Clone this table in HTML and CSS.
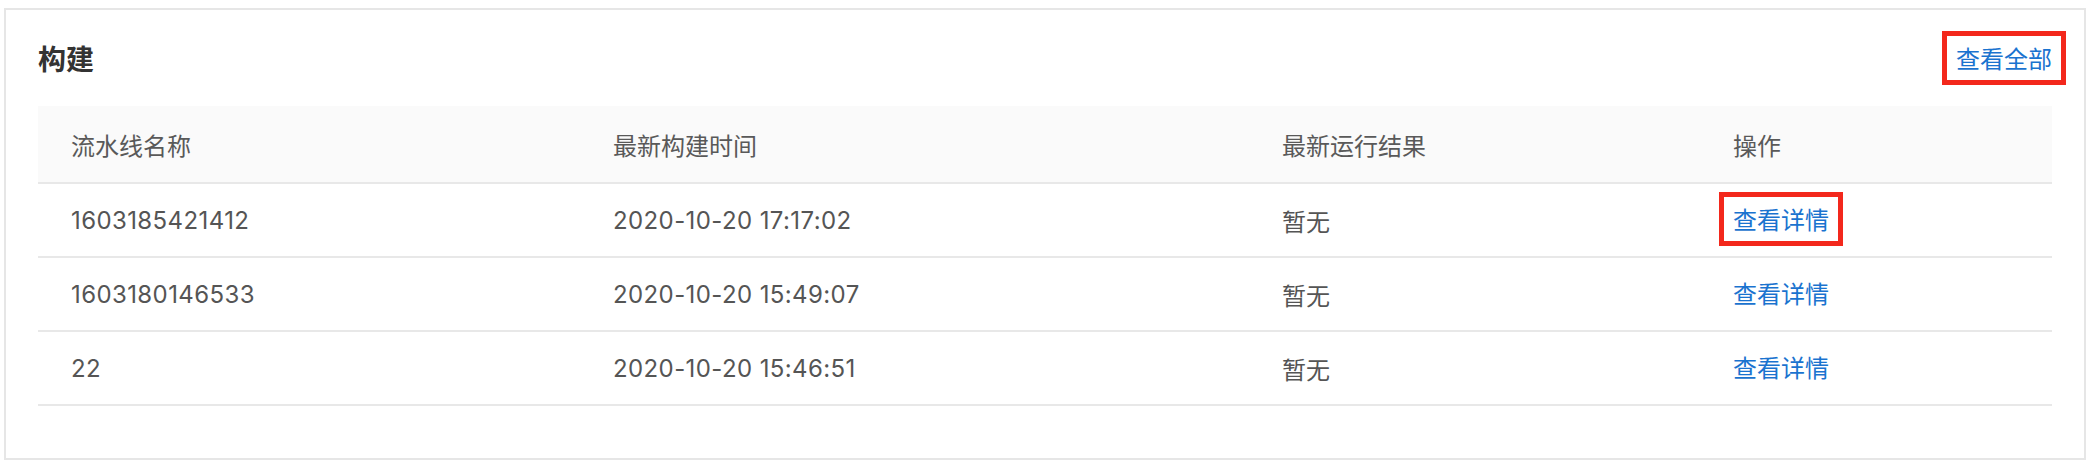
FILE: index.html
```html
<!DOCTYPE html>
<html lang="zh-CN">
<head>
<meta charset="utf-8">
<title>构建</title>
<link rel="stylesheet" href="styles.css">
</head>
<body>
<section class="card">
  <header class="card-head">
    <h2 class="card-title">构建</h2>
    <a class="link mark" href="#">查看全部</a>
  </header>
  <table class="table">
    <colgroup>
      <col class="c1"><col class="c2"><col class="c3"><col class="c4">
    </colgroup>
    <thead>
      <tr><th>流水线名称</th><th>最新构建时间</th><th>最新运行结果</th><th>操作</th></tr>
    </thead>
    <tbody>
      <tr><td>1603185421412</td><td>2020-10-20 17:17:02</td><td class="cn">暂无</td><td><a class="link mark" href="#">查看详情</a></td></tr>
      <tr><td>1603180146533</td><td>2020-10-20 15:49:07</td><td class="cn">暂无</td><td><a class="link" href="#">查看详情</a></td></tr>
      <tr><td>22</td><td>2020-10-20 15:46:51</td><td class="cn">暂无</td><td><a class="link" href="#">查看详情</a></td></tr>
    </tbody>
  </table>
</section>
</body>
</html>
```
FILE: styles.css
```css
html, body {
  margin: 0;
  padding: 0;
  background: #ffffff;
}
body {
  font-family: Inter, "Noto Sans CJK SC", sans-serif;
  color: #595959;
}
.card {
  margin: 8px 4px 0 4px;
  width: 2082px;
  height: 452px;
  box-sizing: border-box;
  border: 2px solid #e6e6e6;
  padding: 0 32px;
}
.card-head {
  height: 96px;
  display: flex;
  align-items: center;
  justify-content: space-between;
}
.card-title {
  margin: 0;
  font-family: "Noto Sans CJK SC", sans-serif;
  font-size: 28px;
  font-weight: 700;
  color: #333333;
}
.link {
  font-family: "Noto Sans CJK SC", sans-serif;
  font-size: 24px;
  letter-spacing: 0;
  color: #1a73cf;
  text-decoration: none;
  line-height: 26px;
  display: inline-block;
}
.mark {
  outline: 5px solid #f3281c;
  outline-offset: 9px;
}
.table {
  width: 2014px;
  border-collapse: collapse;
  table-layout: fixed;
  font-size: 24px;
  letter-spacing: 0.4px;
}
.c1 { width: 542px; }
.c2 { width: 669px; }
.c3 { width: 451px; }
.c4 { width: 352px; }
.table th {
  background: #fafafa;
  font-weight: 400;
  text-align: left;
  height: 76px;
  padding: 0 0 0 33px;
  border-bottom: 2px solid #e8e8e8;
  font-family: "Noto Sans CJK SC", sans-serif;
  font-size: 24px;
  letter-spacing: 0;
  color: #595959;
}
.table td {
  height: 72px;
  padding: 0 0 0 33px;
  border-bottom: 2px solid #e8e8e8;
  color: #555555;
}
.table td.cn {
  font-family: "Noto Sans CJK SC", sans-serif;
  letter-spacing: 0;
}
```
